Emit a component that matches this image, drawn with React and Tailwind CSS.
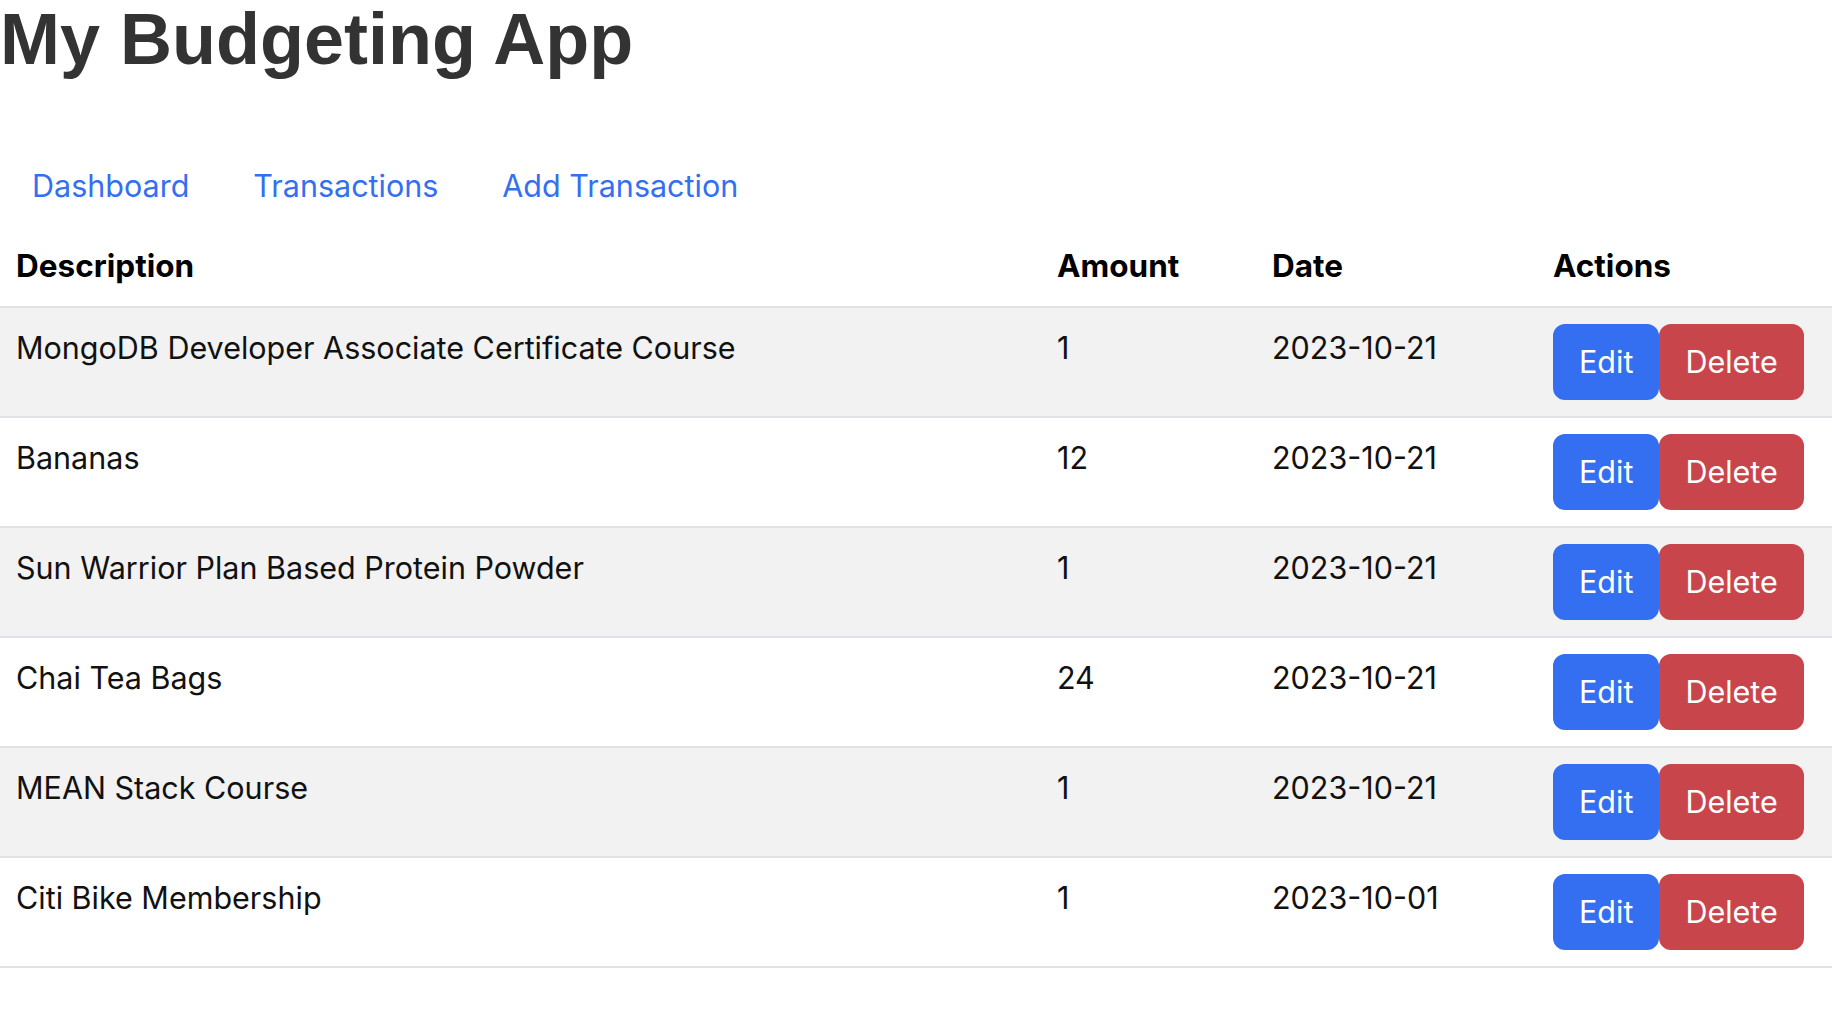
import React from "react";

const transactions = [
  { id: 1, description: "MongoDB Developer Associate Certificate Course", amount: 1, date: "2023-10-21" },
  { id: 2, description: "Bananas", amount: 12, date: "2023-10-21" },
  { id: 3, description: "Sun Warrior Plan Based Protein Powder", amount: 1, date: "2023-10-21" },
  { id: 4, description: "Chai Tea Bags", amount: 24, date: "2023-10-21" },
  { id: 5, description: "MEAN Stack Course", amount: 1, date: "2023-10-21" },
  { id: 6, description: "Citi Bike Membership", amount: 1, date: "2023-10-01" },
];

function NavLink({ children }) {
  return (
    <a href="#" className="block px-[32px] py-[16px] text-[#346ff1] no-underline">
      {children}
    </a>
  );
}

export default function App() {
  return (
    <div className="min-h-screen bg-white font-['Inter',sans-serif] text-[30.5px] leading-[48px] text-[#111111]">
      <h1 className="mb-[68px] font-['Liberation_Sans',Arial,sans-serif] text-[72px] font-bold leading-[78px] text-[#333333]">
        My Budgeting App
      </h1>

      <nav className="flex">
        <NavLink>Dashboard</NavLink>
        <NavLink>Transactions</NavLink>
        <NavLink>Add Transaction</NavLink>
      </nav>

      <table className="w-full table-fixed border-collapse">
        <colgroup>
          <col className="w-[1041px]" />
          <col className="w-[215px]" />
          <col className="w-[281px]" />
          <col className="w-[295px]" />
        </colgroup>
        <thead>
          <tr className="border-b-2 border-[#dfe2e6] text-[31.5px] text-black">
            <th className="p-[16px] text-left font-bold">Description</th>
            <th className="p-[16px] text-left font-bold">Amount</th>
            <th className="p-[16px] text-left font-bold">Date</th>
            <th className="p-[16px] text-left font-bold">Actions</th>
          </tr>
        </thead>
        <tbody>
          {transactions.map((t, i) => (
            <tr
              key={t.id}
              className={`border-b-2 border-[#dfe2e6] ${i % 2 === 0 ? "bg-[#f2f2f2]" : "bg-white"}`}
            >
              <td className="p-[16px] align-top">{t.description}</td>
              <td className="p-[16px] align-top">{t.amount}</td>
              <td className="p-[16px] align-top">{t.date}</td>
              <td className="p-[16px] align-top">
                <div className="flex">
                  <button className="rounded-[12px] border-2 border-[#346ff1] bg-[#346ff1] px-[24px] py-[12px] text-white">
                    Edit
                  </button>
                  <button className="rounded-[12px] border-2 border-[#c9454c] bg-[#c9454c] px-[24px] py-[12px] text-white">
                    Delete
                  </button>
                </div>
              </td>
            </tr>
          ))}
        </tbody>
      </table>
    </div>
  );
}
